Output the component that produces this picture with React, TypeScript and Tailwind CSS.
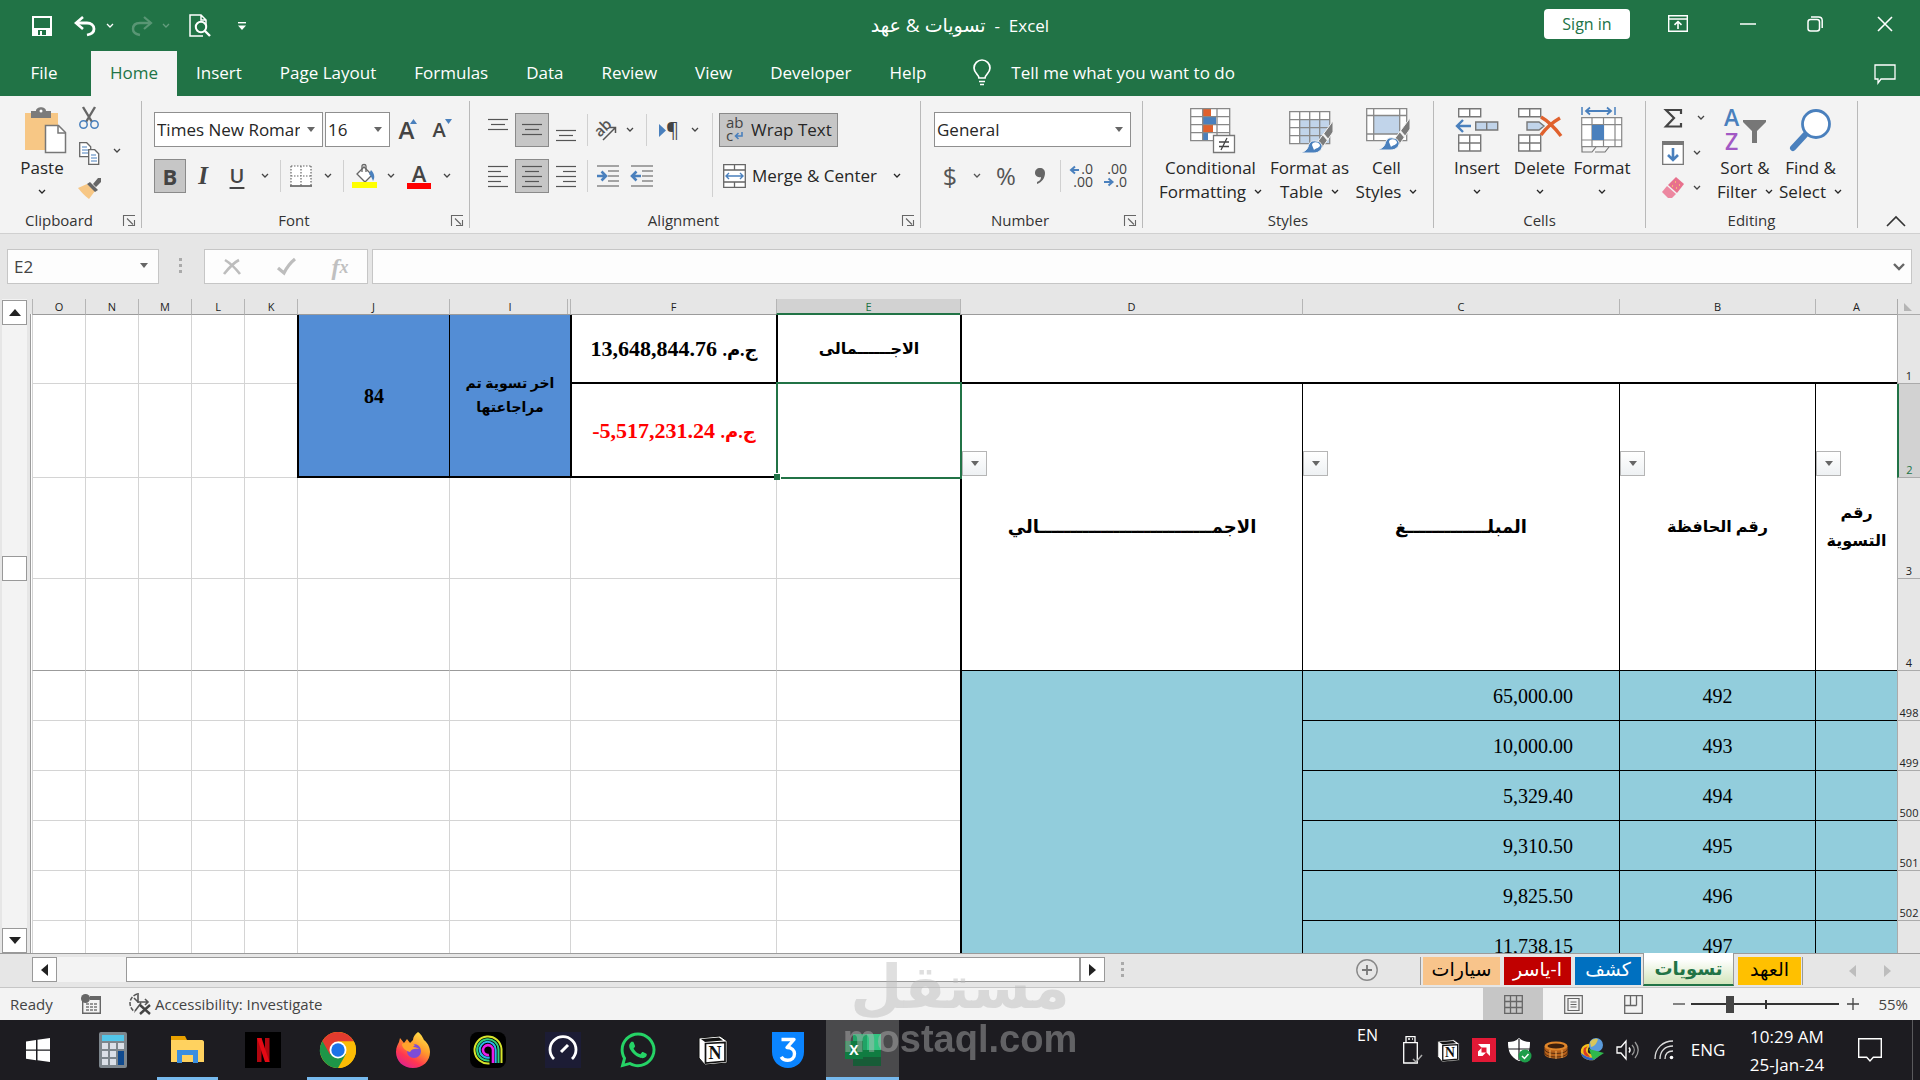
import React from "react";
import { FaWhatsapp } from "react-icons/fa";

const UI = "font-['Open_Sans','Noto_Sans','DejaVu_Sans',sans-serif]";
const SERIF = "font-['Liberation_Serif','DejaVu_Sans',serif]";

type Kids = { children?: React.ReactNode };

function Svg({ w, h, children, className = "" }: Kids & { w: number; h: number; className?: string }) {
  return (
    <svg width={w} height={h} viewBox={`0 0 ${w} ${h}`} fill="none" aria-hidden="true" className={`shrink-0 overflow-visible ${className}`}>
      {children}
    </svg>
  );
}

const Chev = () => (
  <Svg w={8} h={6}>
    <path d="M1 1l3 3 3-3" stroke="currentColor" strokeWidth="1.3" />
  </Svg>
);

const Tri = ({ className = "" }: { className?: string }) => (
  <Svg w={8} h={5} className={className}>
    <path d="M0 0h8L4 5z" fill="#666" />
  </Svg>
);

function Btn({ label, className = "", children }: Kids & { label: string; className?: string }) {
  return (
    <button type="button" aria-label={label} className={`flex shrink-0 items-center justify-center ${className}`}>
      {children}
    </button>
  );
}

const More = ({ label, className = "w-[22px]" }: { label: string; className?: string }) => (
  <Btn label={label} className={`h-[34px] ${className}`}>
    <Chev />
  </Btn>
);

const Sep = ({ className = "h-8" }: { className?: string }) => (
  <div className={`mx-1 w-px shrink-0 bg-[#d0d0d0] ${className}`} />
);

function Picker({ label, value, className }: { label: string; value: string; className: string }) {
  return (
    <div className={`relative h-[35px] shrink-0 ${className}`}>
      <select
        aria-label={label}
        className="h-full w-full appearance-none overflow-hidden rounded-none border border-[#8f8f8f] bg-white pr-[22px] pl-[2px] text-[17px] text-[#262626]"
      >
        <option>{value}</option>
      </select>
      <Tri className="pointer-events-none absolute top-[15px] right-2" />
    </div>
  );
}

/* ---------- title bar ---------- */

function TitleBar() {
  return (
    <header className="flex h-[51px] items-center text-white">
      <div className="flex flex-1 items-center">
        <Btn label="Save" className="ml-6 w-9">
          <Svg w={20} h={20}>
            <path d="M1 1h18v18H1z" stroke="#fff" strokeWidth="2" />
            <path d="M1 12h18v7H1z" fill="#fff" />
            <path d="M6 14h8v5H6z" fill="#217346" />
            <path d="M8 15h2v4H8z" fill="#fff" />
          </Svg>
        </Btn>
        <Btn label="Undo" className="ml-[7px] w-9">
          <Svg w={22} h={20}>
            <path d="M9 1L2 7l7 6" stroke="#fff" strokeWidth="2.6" />
            <path d="M3 7h10c4 0 7 2 7 6 0 3-2 5-7 6" stroke="#fff" strokeWidth="2.8" />
          </Svg>
        </Btn>
        <More label="Undo history" className="ml-px w-3" />
        <Btn label="Redo" className="ml-2 w-9 opacity-25">
          <Svg w={22} h={20}>
            <path d="M13 1l7 6-7 6" stroke="#fff" strokeWidth="2.2" />
            <path d="M19 7H9c-4 0-7 2-7 6 0 3 2 5 7 6" stroke="#fff" strokeWidth="2.4" />
          </Svg>
        </Btn>
        <More label="Redo history" className="w-3 opacity-30" />
        <Btn label="Print Preview" className="ml-[10px] w-9">
          <Svg w={22} h={24}>
            <path d="M14 22H1V1h11l5 5v5M12 1v5h5" stroke="#fff" strokeWidth="1.5" />
            <circle cx="12" cy="13" r="5.2" stroke="#fff" strokeWidth="2" />
            <path d="M16 17l5 5" stroke="#fff" strokeWidth="2.4" />
          </Svg>
        </Btn>
        <Btn label="Customize Quick Access Toolbar" className="ml-[6px] w-9">
          <Svg w={8} h={8}>
            <path d="M0 .7h8" stroke="#fff" strokeWidth="1.4" />
            <path d="M0 3.500h8L4 8z" fill="#fff" />
          </Svg>
        </Btn>
      </div>
      <h1 className="text-[17px] leading-6 whitespace-pre">
        <bdi dir="rtl" className="text-[19px]">تسويات &amp; عهد</bdi>
        {"  -  Excel"}
      </h1>
      <div className="flex flex-1 items-center justify-end">
        <button type="button" className="mr-[22px] mb-1 h-[30px] w-[86px] rounded-sm bg-white text-base text-[#217346]">
          Sign in
        </button>
        <Btn label="Ribbon Display Options" className="h-11 w-[52px] pb-1">
          <Svg w={20} h={17}>
            <path d="M.7.7h18.6v15.6H.7zM1 4h18" stroke="#fff" strokeWidth="1.4" />
            <path d="M10 14V7M6.5 9.800L10 6.500l3.500 3.300" stroke="#fff" strokeWidth="1.600" />
          </Svg>
        </Btn>
        <Btn label="Minimize" className="ml-3 h-11 w-16 pb-1">
          <Svg w={16} h={2}>
            <path d="M0 1h16" stroke="#fff" strokeWidth="1.500" />
          </Svg>
        </Btn>
        <Btn label="Restore" className="h-11 w-[70px] pb-1">
          <Svg w={16} h={16}>
            <rect x="1" y="3.500" width="11.500" height="11.500" rx="2.500" stroke="#fff" strokeWidth="1.500" />
            <path d="M4 1h7.500c2.200 0 3.700 1.500 3.700 3.500V12" stroke="#fff" strokeWidth="1.500" />
          </Svg>
        </Btn>
        <Btn label="Close" className="h-11 w-[70px] pb-1">
          <Svg w={16} h={16}>
            <path d="M1 1l14 14M15 1L1 15" stroke="#fff" strokeWidth="1.600" />
          </Svg>
        </Btn>
      </div>
    </header>
  );
}

const TABS = ["Insert", "Page Layout", "Formulas", "Data", "Review", "View", "Developer", "Help"];

function TabBar() {
  return (
    <nav className="flex h-[45px] text-[17px] text-white">
      <button type="button" className="w-[88px] pb-[2px]">File</button>
      <button type="button" className="ml-[3px] w-[86px] bg-[#f3f3f3] pb-[2px] text-[#217346]">Home</button>
      {TABS.map((t) => (
        <button type="button" key={t} className="px-[19px] pb-[2px] whitespace-nowrap">{t}</button>
      ))}
      <button type="button" className="flex items-center pb-[2px] pl-7 whitespace-nowrap">
        <Svg w={18} h={26}>
          <path d="M6 18c0-3-5-5-5-10a8 8 0 0116 0c0 5-5 7-5 10z" stroke="#fff" strokeWidth="1.700" />
          <path d="M6 21.500h6M7 24.500h4" stroke="#fff" strokeWidth="1.600" />
        </Svg>
        <span className="ml-5">Tell me what you want to do</span>
      </button>
      <Btn label="Comments" className="mr-[13px] ml-auto w-11">
        <Svg w={22} h={20}>
          <path d="M1 1h20v14H7l-3 4v-4H1z" stroke="#fff" strokeWidth="1.300" />
        </Svg>
      </Btn>
    </nav>
  );
}

/* ---------- ribbon ---------- */

function Group({ label, launcher, className, children }: Kids & { label: string; launcher?: boolean; className: string }) {
  return (
    <section aria-label={label} className={`my-[5px] flex shrink-0 flex-col border-r border-[#b9b9b9] ${className}`}>
      <div className="flex-1">{children}</div>
      <div className="flex h-4 items-center text-[15px] leading-4 text-[#333]">
        <span className="flex-1 text-center">{label}</span>
        {launcher && (
          <Btn label={`${label} settings`} className="mr-[5px] ml-1 w-[14px]">
            <Svg w={12} h={11}>
              <path d="M.5 11V.5H12M11.500 5v5.500H5M4 3.500l6 6" stroke="#666" strokeWidth="1.100" />
            </Svg>
          </Btn>
        )}
      </div>
    </section>
  );
}

function Big({ label, lines, icon, className }: { label?: string; lines: string[]; icon: React.ReactNode; className: string }) {
  return (
    <button type="button" aria-label={label} className={`flex shrink-0 flex-col items-center text-[17px] leading-6 whitespace-nowrap text-[#262626] ${className}`}>
      <span className="flex h-[48px] items-center">{icon}</span>
      <span className="mt-[2px]">{lines[0]}</span>
      <span className="flex h-6 items-center gap-2">
        {lines[1]}
        <Chev />
      </span>
    </button>
  );
}

function Lines({ rows, y = 1, gap = 5 }: { rows: [number, number][]; y?: number; gap?: number }) {
  return (
    <Svg w={20} h={22}>
      {rows.map(([a, b], i) => (
        <path key={i} d={`M${a} ${y + i * gap + 0.5}H${b}`} stroke="#555" strokeWidth="1.200" />
      ))}
    </Svg>
  );
}

const L: [number, number][] = [[0, 20], [0, 13], [0, 20], [0, 13], [0, 20]];
const C: [number, number][] = [[0, 20], [3, 17], [0, 20], [3, 17], [0, 20]];
const R: [number, number][] = [[0, 20], [7, 20], [0, 20], [7, 20], [0, 20]];
const V: [number, number][] = [[0, 20], [3, 17], [0, 20]];

const ON = "border border-[#8a8a8a] bg-[#c6c6c6]";

function Indent({ out }: { out?: boolean }) {
  return (
    <Svg w={22} h={22}>
      <path d="M0 1h22M0 21h22M11 6h11M11 11h11M11 16h11" stroke="#555" strokeWidth="1.200" />
      <path
        d={out ? "M1 11h9M5.500 6.500L1 11l4.500 4.500" : "M0 11h9M4.500 6.500L9 11l-4.500 4.500"}
        stroke="#4a80bd"
        strokeWidth="2.600"
      />
    </Svg>
  );
}

function Brush({ x, y }: { x: number; y: number }) {
  return (
    <g transform={`translate(${x} ${y})`}>
      <path d="M33 0v11L22 27l-6-4z" fill="#7b7b7b" stroke="#f3f3f3" strokeWidth="1" />
      <path d="M23 13l5 6" stroke="#f3f3f3" strokeWidth="2" />
      <path d="M16 20c-5-1-7 2-8 6-1 3-4 5-8 6h14c5 0 9-4 8-8-1-2-3-4-6-4z" fill="#4a80bd" stroke="#f3f3f3" />
      <path d="M12 24c0-3 6-4 8 0 0 3-4 3-6 5z" fill="#fff" />
    </g>
  );
}

function Ribbon() {
  return (
    <div className="flex h-[138px] items-stretch border-b border-[#d0d0d0] bg-[#f3f3f3] text-[#444]">
      <Group label="Clipboard" launcher className="w-[142px]">
        <div className="flex pt-[5px] pl-4">
          <Big
            label="Paste"
            lines={["Paste", ""]}
            className="w-[52px]"
            icon={
              <Svg w={44} h={46} className="ml-2">
                <path d="M1 6h33v37H1z" fill="#f7c785" />
                <path d="M7 4h5c0-5 10-5 10 0h5v7H7z" fill="#7b7b7b" />
                <circle cx="17" cy="4" r="1.500" fill="#fff" />
                <path d="M21.500 18.500h13l7 7v20h-20z" fill="#fff" stroke="#777" strokeWidth="1.500" />
                <path d="M34 19v7h7" stroke="#777" strokeWidth="1.500" />
              </Svg>
            }
          />
          <div className="ml-[3px] flex flex-col">
            <Btn label="Cut" className="h-7 w-9 pb-1">
              <Svg w={20} h={22}>
                <path d="M4 0l9 15M16 0L7 15" stroke="#666" strokeWidth="2.400" />
                <circle cx="4.500" cy="17.500" r="3.700" stroke="#4a80bd" strokeWidth="1.500" />
                <circle cx="15.500" cy="17.500" r="3.700" stroke="#4a80bd" strokeWidth="1.500" />
              </Svg>
            </Btn>
            <div className="flex">
              <Btn label="Copy" className="h-[38px] w-9">
                <Svg w={21} h={23}>
                  <path d="M.7.700h7l4 4v10h-11z" fill="#fff" stroke="#666" strokeWidth="1.300" />
                  <path d="M3 5h5M3 8h6M3 11h6" stroke="#4a80bd" strokeWidth="1.200" />
                  <path d="M9.700 7.700h6l4 4v10.600h-10z" fill="#fff" stroke="#666" strokeWidth="1.300" />
                  <path d="M12 13h5M12 16h6M12 19h6" stroke="#4a80bd" strokeWidth="1.200" />
                </Svg>
              </Btn>
              <More label="Copy options" className="w-5" />
            </div>
            <Btn label="Format Painter" className="h-8 w-9">
              <Svg w={23} h={21}>
                <path d="M0 10l9-4 8 7-6 8C6 17 3 14 0 10z" fill="#f7c785" />
                <path d="M9 6l3-2 8 8-3 2zM15 6l5-6h3v4l-5 5z" fill="#666" />
              </Svg>
            </Btn>
          </div>
        </div>
      </Group>

      <Group label="Font" launcher className="w-[328px]">
        <div className="flex flex-col gap-3 pt-[11px] pl-3">
          <div className="flex items-center">
            <Picker label="Font" value="Times New Roman" className="w-[169px]" />
            <Picker label="Font size" value="16" className="ml-[2px] w-[65px]" />
            <Btn label="Increase font size" className="w-9 items-end text-[24px] leading-7 font-semibold">
              <span>A</span>
              <Svg w={7} h={5} className="mb-5 -ml-1">
                <path d="M0 5h7L3.500 0z" fill="#4a80bd" />
              </Svg>
            </Btn>
            <Btn label="Decrease font size" className="w-8 items-end text-[20px] leading-7 font-semibold">
              <span>A</span>
              <Svg w={7} h={5} className="mb-5 -ml-px">
                <path d="M0 0h7L3.500 5z" fill="#4a80bd" />
              </Svg>
            </Btn>
          </div>
          <div className="flex items-center">
            <Btn label="Bold" className={`h-[34px] w-8 text-[22px] font-bold ${ON}`}>B</Btn>
            <Btn label="Italic" className="w-[34px] font-['Liberation_Serif',serif] text-[25px] leading-8 font-bold italic">I</Btn>
            <Btn label="Underline" className="w-[34px] text-[20px] leading-8 font-semibold underline underline-offset-4">U</Btn>
            <More label="Underline options" />
            <Sep />
            <Btn label="Borders" className="w-8">
              <Svg w={22} h={22}>
                <path d="M1 1h20v20H1z" fill="#fff" />
                <path d="M1 1h20M1 11h20M1 1v20M11 1v20M21 1v20" stroke="#666" strokeWidth="1.200" strokeDasharray="1.500 1.500" />
                <path d="M0 21h22" stroke="#555" strokeWidth="1.500" />
              </Svg>
            </Btn>
            <More label="Border options" />
            <Sep />
            <Btn label="Fill color" className="w-8">
              <Svg w={25} h={24}>
                <path d="M5 10l7-7 8 8-7 7z" fill="#fff" stroke="#666" strokeWidth="1.300" />
                <path d="M10 8V2c0-2 4-2 4 0v6" stroke="#666" strokeWidth="1.300" />
                <path d="M19 6c4 4 4 8 2 11-1-3-2-5-4-7z" fill="#4a80bd" />
                <path d="M0 18h25v6H0z" fill="#ff0" />
              </Svg>
            </Btn>
            <More label="Fill color options" />
            <Btn label="Font color" className="w-[34px] flex-col text-[22px] leading-5 font-semibold">
              <span>A</span>
              <span className="h-[6px] w-6 bg-[#f00]" />
            </Btn>
            <More label="Font color options" />
          </div>
        </div>
      </Group>

      <Group label="Alignment" launcher className="w-[451px]">
        <div className="flex items-start pt-3 pl-[11px]">
          <div className="flex flex-col gap-3">
            <div className="flex items-center">
              <Btn label="Top Align" className="h-[34px] w-[34px]"><Lines rows={V} y={0} /></Btn>
              <Btn label="Middle Align" className={`h-[34px] w-[34px] ${ON}`}><Lines rows={V} y={5} /></Btn>
              <Btn label="Bottom Align" className="h-[34px] w-[34px]"><Lines rows={V} y={11} /></Btn>
              <Sep />
              <Btn label="Orientation" className="w-7">
                <Svg w={22} h={22}>
                  <text x="0" y="15" transform="rotate(-45 7 11)" fontSize="15" fontWeight="600" fill="#555">ab</text>
                  <path d="M8 21L20 9M15 8.500h5.500V14" stroke="#555" strokeWidth="1.500" />
                </Svg>
              </Btn>
              <More label="Orientation options" className="w-5" />
              <Sep className="ml-[6px] h-8" />
              <Btn label="Text direction" className="w-9 text-[20px] leading-7">
                <Svg w={7} h={13}>
                  <path d="M0 0l7 6.500L0 13z" fill="#4a80bd" />
                </Svg>
                ¶
              </Btn>
              <More label="Text direction options" className="w-4" />
            </div>
            <div className="flex items-center">
              <Btn label="Align Left" className="h-[34px] w-[34px]"><Lines rows={L} /></Btn>
              <Btn label="Center" className={`h-[34px] w-[34px] ${ON}`}><Lines rows={C} /></Btn>
              <Btn label="Align Right" className="h-[34px] w-[34px]"><Lines rows={R} /></Btn>
              <Sep />
              <Btn label="Decrease Indent" className="h-[34px] w-8"><Indent /></Btn>
              <Btn label="Increase Indent" className="h-[34px] w-9"><Indent out /></Btn>
            </div>
          </div>
          <Sep className="mr-[6px] ml-[9px] h-[84px]" />
          <div className="flex flex-col gap-3 text-[17px] text-[#262626]">
            <button type="button" className={`flex h-[34px] w-[119px] items-center gap-[6px] pl-[6px] whitespace-nowrap ${ON}`}>
              <Svg w={19} h={24}>
                <text x="0" y="10" fontSize="15" fill="#444">ab</text>
                <text x="0" y="23" fontSize="15" fill="#444">c</text>
                <path d="M16 14v4h-6M12.500 15l-3 3 3 3" stroke="#4a80bd" strokeWidth="1.600" />
              </Svg>
              Wrap Text
            </button>
            <div className="flex items-center">
              <button type="button" className="flex h-[34px] items-center gap-[6px] pl-1 whitespace-nowrap">
                <Svg w={23} h={24}>
                  <path d="M.7.700h21.600v22.600H.700zM.7 6h21.600M.7 18h21.600M11.500 1v5M11.500 18v5" fill="#fff" stroke="#666" strokeWidth="1.300" />
                  <path d="M3 12h17M6 9l-3 3 3 3M17 9l3 3-3 3" stroke="#4a80bd" strokeWidth="1.400" />
                </Svg>
                Merge &amp; Center
              </button>
              <More label="Merge options" className="ml-2 w-6" />
            </div>
          </div>
        </div>
      </Group>

      <Group label="Number" launcher className="w-[222px]">
        <div className="flex flex-col gap-3 pt-[11px] pl-[13px]">
          <Picker label="Number format" value="General" className="w-[197px]" />
          <div className="flex items-center text-[25px] leading-8 text-[#555]">
            <Btn label="Accounting format" className="w-8">$</Btn>
            <More label="Accounting options" />
            <Btn label="Percent style" className="w-9 text-[24px]">%</Btn>
            <Btn label="Comma style" className="w-8">
              <Svg w={10} h={16}>
                <path d="M5 0c3 0 5 2 5 5 0 5-3 9-8 11v-2c3-1 4-3 4-5C2 10 0 7 0 5c0-3 2-5 5-5z" fill="#666" />
              </Svg>
            </Btn>
            <Sep />
            <Btn label="Increase Decimal" className="w-8">
              <Svg w={23} h={26}>
                <text x="23" y="11" textAnchor="end" fontSize="14" fill="#444">.0</text>
                <text x="23" y="24" textAnchor="end" fontSize="14" fill="#444">.00</text>
                <path d="M1 7h8M5 3.500L1 7l4 3.500" stroke="#4a80bd" strokeWidth="2" />
              </Svg>
            </Btn>
            <Btn label="Decrease Decimal" className="w-9">
              <Svg w={23} h={26}>
                <text x="23" y="11" textAnchor="end" fontSize="14" fill="#444">.00</text>
                <text x="23" y="24" textAnchor="end" fontSize="14" fill="#444">.0</text>
                <path d="M0 19h8M4.500 15.500l4 3.500-4 3.500" stroke="#4a80bd" strokeWidth="2" />
              </Svg>
            </Btn>
          </div>
        </div>
      </Group>

      <Group label="Styles" className="w-[291px]">
        <div className="flex pt-[5px] pl-3">
          <Big
            lines={["Conditional", "Formatting"]}
            className="w-[111px]"
            icon={
              <Svg w={45} h={45} className="ml-1">
                <path d="M.7.700h39v32h-39z" fill="#fff" />
                <path d="M13 1h8v8h-8zM13 17h10v8H13z" fill="#e0612d" />
                <path d="M13 9h13v8H13zM13 25h5v8h-5z" fill="#4a80bd" />
                <path d="M.7.700h39v32h-39zM.7 8.700h39M.7 16.700h39M.7 24.700h39M12.700 1v32M27 1v32" stroke="#888" strokeWidth="1.300" />
                <path d="M23.500 27.500h21v17h-21z" fill="#fff" stroke="#777" strokeWidth="1.300" />
                <path d="M29 34h10M29 38.500h10M37 30l-6 12" stroke="#444" strokeWidth="1.300" />
              </Svg>
            }
          />
          <Big
            lines={["Format as", "Table"]}
            className="w-[87px]"
            icon={
              <Svg w={46} h={44} className="mt-[6px] ml-1">
                <path d="M.7.700h40v32h-40z" fill="#fff" />
                <path d="M10.700 8.700h30v24h-30z" fill="#c1d4ea" />
                <path d="M.7.700h40v32h-40zM.7 8.700h40M.7 16.700h40M.7 24.700h40M10.700 1v32M20.700 1v32M30.700 1v32" stroke="#888" strokeWidth="1.300" />
                <Brush x={11} y={10} />
              </Svg>
            }
          />
          <Big
            lines={["Cell", "Styles"]}
            className="w-[67px]"
            icon={
              <Svg w={46} h={44} className="ml-1">
                <path d="M.7.700h40v32h-40z" fill="#fff" />
                <path d="M7.700 8h26v18h-26z" fill="#c1d4ea" />
                <path d="M.7.700h40v32h-40zM.7 7.500h40M.7 26h40M7.700 1v32M33.700 1v32" stroke="#888" strokeWidth="1.300" />
                <Brush x={11} y={10} />
              </Svg>
            }
          />
        </div>
      </Group>

      <Group label="Cells" className="w-[212px]">
        <div className="flex pt-[5px] pl-3">
          <Big
            label="Insert"
            lines={["Insert", ""]}
            className="w-[62px]"
            icon={
              <Svg w={44} h={44}>
                <path d="M3.700.700h22v8h-22zM14.700.700v8M3.700 27h22v16h-22zM3.700 35h22M14.700 27v16" fill="#fff" stroke="#777" strokeWidth="1.400" />
                <path d="M20.700 14h22v8h-22zM31.700 14v8" fill="#c1d4ea" stroke="#777" strokeWidth="1.400" />
                <path d="M2 18h14M8 12l-6 6 6 6" stroke="#4a80bd" strokeWidth="2.400" />
              </Svg>
            }
          />
          <Big
            label="Delete"
            lines={["Delete", ""]}
            className="w-[63px]"
            icon={
              <Svg w={44} h={44}>
                <path d="M.7.700h22v8h-22zM11.700.700v8M.7 27h22v16h-22zM.7 35h22M11.700 27v16" fill="#fff" stroke="#777" strokeWidth="1.400" />
                <path d="M9 14h12l5 4-5 4H9z" fill="#c1d4ea" stroke="#777" strokeWidth="1.400" />
                <path d="M23 9c7 4 14 11 20 19M42 10c-7 4-14 10-19 17" stroke="#e0612d" strokeWidth="3.400" />
              </Svg>
            }
          />
          <Big
            label="Format"
            lines={["Format", ""]}
            className="w-[62px]"
            icon={
              <Svg w={42} h={46}>
                <path d="M1 0v8M34 0v8" stroke="#4a80bd" strokeWidth="1.500" />
                <path d="M5 4h25M9 .500L5 4l4 3.500M26 .500L30 4l-4 3.500" stroke="#4a80bd" strokeWidth="1.800" />
                <path d="M.7 10.700h40v29h-40zM.7 17.700h40M.7 33h40M11 11v29M22.500 11v29M34 11v29" fill="#fff" stroke="#888" strokeWidth="1.200" />
                <path d="M11 18h12v15H11z" fill="#4a80bd" />
                <path d="M1 40v5h10l4-5M14 45h10l4-5" stroke="#777" strokeWidth="1.200" />
              </Svg>
            }
          />
        </div>
      </Group>

      <Group label="Editing" className="w-[212px]">
        <div className="flex pt-[5px] pl-[11px]">
          <div className="flex w-14 flex-col text-[#444]">
            <div className="flex h-7 items-center pb-1">
              <Btn label="AutoSum" className="w-8">
                <Svg w={18} h={19}>
                  <path d="M17 5V1H2l8 8-8 8.500h15V14" stroke="#444" strokeWidth="2.200" />
                </Svg>
              </Btn>
              <More label="AutoSum options" className="w-6" />
            </div>
            <div className="flex h-[38px] items-center">
              <Btn label="Fill" className="w-8">
                <Svg w={22} h={24}>
                  <path d="M.7.700h20.600v22.600H.700z" fill="#fff" stroke="#777" strokeWidth="1.300" />
                  <path d="M0 0h22v4H0z" fill="#777" />
                  <path d="M11 7v12M6 14l5 5 5-5" stroke="#4a80bd" strokeWidth="2.600" />
                </Svg>
              </Btn>
              <More label="Fill options" className="w-4" />
            </div>
            <div className="flex h-8 items-center">
              <Btn label="Clear" className="w-8">
                <Svg w={22} h={22}>
                  <path d="M14 0l8 7-7 9-9-8z" fill="#e8718d" />
                  <path d="M5 9l9 8-4 4H6l-6-6z" fill="#ec87a0" />
                  <path d="M13 5h1M17 8h1M10 9h1M14 11h1" stroke="#f8d06b" strokeWidth="1.400" />
                </Svg>
              </Btn>
              <More label="Clear options" className="w-4" />
            </div>
          </div>
          <Big
            lines={["Sort &", "Filter"]}
            className="w-16"
            icon={
              <Svg w={42} h={44}>
                <text x="0" y="18" fontSize="23" fill="#4a80bd" fontWeight="600">A</text>
                <text x="1" y="42" fontSize="23" fill="#a259c4" fontWeight="600">Z</text>
                <path d="M19 12h23v2l-9 9v12h-5V23l-9-9z" fill="#777" />
              </Svg>
            }
          />
          <Big
            lines={["Find &", "Select"]}
            className="w-[67px]"
            icon={
              <Svg w={42} h={44}>
                <circle cx="26" cy="16" r="13.500" fill="#fff" stroke="#4a80bd" strokeWidth="2.800" />
                <path d="M15 27L3 40" stroke="#4a80bd" strokeWidth="6" strokeLinecap="round" />
              </Svg>
            }
          />
        </div>
      </Group>
      <Btn label="Collapse the Ribbon" className="mr-3 ml-auto h-6 w-6 self-end">
        <Svg w={20} h={12}>
          <path d="M1 11l9-9 9 9" stroke="#333" strokeWidth="1.600" />
        </Svg>
      </Btn>
    </div>
  );
}

/* ---------- formula bar ---------- */

const Dots = ({ className = "" }: { className?: string }) => (
  <Svg w={3} h={16} className={className}>
    <path d="M0 0h3v3H0zM0 6h3v3H0zM0 12h3v3H0z" fill="#aaa" />
  </Svg>
);

function FormulaBar() {
  return (
    <div className="flex h-[65px] items-start bg-[#e6e6e6] pt-[15px] pr-2 pl-[7px]">
      <div className="relative h-[35px] w-[152px]">
        <input aria-label="Name Box" defaultValue="E2" className="h-full w-full border border-[#c6c6c6] bg-[#fdfdfd] px-[6px] text-[17px] text-[#444]" />
        <Tri className="absolute top-[14px] right-[11px]" />
      </div>
      <Dots className="mt-[9px] ml-5" />
      <div className="ml-[22px] flex h-[35px] w-[164px] items-center border border-[#c6c6c6] bg-[#fdfdfd] text-[#c0c0c0]">
        <Btn label="Cancel" className="flex-1">
          <Svg w={18} h={16}>
            <path d="M2 1c5 3 11 9 15 14M16 1C10 4 5 10 1 15" stroke="#bdbdbd" strokeWidth="2.600" />
          </Svg>
        </Btn>
        <Btn label="Enter" className="flex-1">
          <Svg w={19} h={17}>
            <path d="M1 10l6 5C10 9 13 5 18 1" stroke="#bdbdbd" strokeWidth="3.200" />
          </Svg>
        </Btn>
        <Btn label="Insert Function" className="flex-1 font-['Liberation_Serif',serif] text-[24px] leading-7 font-bold italic">
          <span>f</span>
          <span className="text-[18px]">x</span>
        </Btn>
      </div>
      <div className="relative ml-1 h-[35px] flex-1">
        <input aria-label="Formula Bar" className="h-full w-full border border-[#c6c6c6] bg-[#fdfdfd] px-2 text-[17px]" />
        <Svg w={12} h={8} className="absolute top-[14px] right-[7px]">
          <path d="M1 1l5 5 5-5" stroke="#666" strokeWidth="2.400" />
        </Svg>
      </div>
    </div>
  );
}

/* ---------- worksheet ---------- */

const EMPTY = ["K", "L", "M", "N", "O"];
const DATA = [
  { row: 498, id: "492", amount: "65,000.00" },
  { row: 499, id: "493", amount: "10,000.00" },
  { row: 500, id: "494", amount: "5,329.40" },
  { row: 501, id: "495", amount: "9,310.50" },
  { row: 502, id: "496", amount: "9,825.50" },
  { row: 503, id: "497", amount: "11,738.15" },
];

/* Arabic elongation (tatweel) of a given length. */
const stretch = (n: number) => "\u0640".repeat(n);

const G = "border-b border-l border-[#d4d4d4] p-0";

function RowHead({ n, active }: { n: number; active?: boolean }) {
  return (
    <th
      scope="row"
      className={`border-b border-b-[#ababab] p-0 text-center align-bottom text-[11px] leading-[14px] font-normal ${
        active ? "border-l-2 border-l-[#217346] bg-[#d2d2d2] text-[#217346]" : "border-l border-l-[#ababab] bg-[#e6e6e6] text-[#222]"
      }`}
    >
      {n}
    </th>
  );
}

function FilterButton({ label }: { label: string }) {
  return (
    <Btn label={label} className="absolute top-[67px] left-0 h-[25px] w-[25px] border border-[#b5b5b5] bg-linear-to-b from-white to-[#eef1f3]">
      <Tri />
    </Btn>
  );
}

const Blank = ({ cols, className = "" }: { cols: string[]; className?: string }) => (
  <>
    {cols.map((c) => (
      <td key={c} className={`${G} ${className}`} />
    ))}
  </>
);

function Sheet() {
  const head = "relative border-l border-b border-l-[#b5b5b5] border-b-[#9b9b9b] p-0 text-[11px] leading-[14px] font-normal text-[#222]";
  const title = `relative border-b border-black p-0 text-center font-bold ${SERIF}`;
  return (
    <table dir="rtl" className="w-full table-fixed border-separate border-spacing-0 bg-white text-black">
      <colgroup>
        <col className="w-[23px]" />
        <col className="w-[82px]" />
        <col className="w-[196px]" />
        <col className="w-[317px]" />
        <col />
        <col className="w-[184px]" />
        <col className="w-[206px]" />
        <col className="w-[121px]" />
        <col className="w-[152px]" />
        {EMPTY.map((c) => (
          <col key={c} className="w-[53px]" />
        ))}
      </colgroup>
      <thead>
        <tr className="h-4 bg-[#e6e6e6]">
          <th className="border-b border-l border-[#ababab] p-0 pr-2" aria-label="Select all">
            <Svg w={8} h={8}>
              <path d="M0 0v8h8z" fill="#b5b5b5" />
            </Svg>
          </th>
          {["A", "B", "C", "D", "E", "F", "I", "J", ...EMPTY].map((c) =>
            c === "E" ? (
              <th key={c} scope="col" className="border-b-2 border-l border-b-[#217346] border-l-[#b5b5b5] bg-[#d2d2d2] p-0 text-[11px] leading-[13px] font-normal text-[#217346]">
                {c}
              </th>
            ) : (
              <th key={c} scope="col" className={head}>
                {c}
                {c === "I" && <span className="absolute inset-y-0 right-[2px] w-px bg-[#b5b5b5]" />}
              </th>
            ),
          )}
        </tr>
      </thead>
      <tbody>
        <tr className="h-[69px]">
          <RowHead n={1} />
          <td colSpan={4} className="border-b-2 border-l-2 border-black p-0" />
          <td className={`border-b-2 border-l-2 border-black p-0 text-center text-[16px] font-bold ${SERIF}`}>{`الاجـ${stretch(4)}ـمالى`}</td>
          <td className={`border-b-2 border-l-2 border-black p-0 text-center text-[22px] font-bold whitespace-nowrap ${SERIF}`}>
            <span className="text-[18px]">ج.م.</span> <bdi dir="ltr">13,648,844.76</bdi>
          </td>
          <td rowSpan={2} className={`border-b-2 border-l border-black bg-[#538dd5] px-1 text-center text-[14px] leading-6 font-bold ${SERIF}`}>
            اخر تسوية تم
            <br />
            مراجاعتها
          </td>
          <td rowSpan={2} className={`border-b-2 border-l-2 border-black bg-[#538dd5] p-0 text-center text-[20px] font-bold ${SERIF}`}>84</td>
          <Blank cols={EMPTY} />
        </tr>
        <tr className="h-[94px]">
          <RowHead n={2} active />
          <td rowSpan={3} className={`${title} border-l text-[16px] leading-7`}>
            <FilterButton label="Filter column A" />
            رقم
            <br />
            التسوية
          </td>
          <td rowSpan={3} className={`${title} border-l text-[16px]`}>
            <FilterButton label="Filter column B" />
            رقم الحافظة
          </td>
          <td rowSpan={3} className={`${title} border-l text-[18px]`}>
            <FilterButton label="Filter column C" />
            {`المبلـ${stretch(11)}ـغ`}
          </td>
          <td rowSpan={3} className={`${title} border-l-2 text-[18px]`}>
            <FilterButton label="Filter column D" />
            {`الاجمـ${stretch(26)}ـالي`}
          </td>
          <td className={`relative ${G}`}>
            <div className="absolute -top-[2px] -right-[2px] -bottom-[2px] -left-px border-2 border-[#217346]" />
            <div className="absolute -bottom-[3px] -left-[3px] size-[7px] border-t border-r border-white bg-[#217346]" />
          </td>
          <td className={`border-b-2 border-l-2 border-black p-0 text-center text-[22px] font-bold whitespace-nowrap text-[#f00] ${SERIF}`}>
            <span className="text-[18px]">ج.م.</span> <bdi dir="ltr">-5,517,231.24</bdi>
          </td>
          <Blank cols={EMPTY} />
        </tr>
        <tr className="h-[101px]">
          <RowHead n={3} />
          <Blank cols={["E", "F", "I", "J", ...EMPTY]} />
        </tr>
        <tr className="h-[92px]">
          <RowHead n={4} />
          <Blank cols={["E", "F", "I", "J", ...EMPTY]} className="border-b-[#9b9b9b]" />
        </tr>
        {DATA.map((d, i) => (
          <tr key={d.row} className="h-[50px]">
            <RowHead n={d.row} />
            <td className="border-b border-l border-black bg-[#92cddc] p-0" />
            <td className={`border-b border-l border-black bg-[#92cddc] p-0 text-center text-[20px] ${SERIF}`}>{d.id}</td>
            <td dir="ltr" className={`border-b border-l border-black bg-[#92cddc] p-0 pr-[45px] text-right text-[20px] ${SERIF}`}>{d.amount}</td>
            {i === 0 && <td rowSpan={DATA.length} className="border-b border-l-2 border-black bg-[#92cddc] p-0" />}
            <Blank cols={["E", "F", "I", "J", ...EMPTY]} />
          </tr>
        ))}
      </tbody>
    </table>
  );
}

const ARROWS = {
  up: "M0 7h12L6 0z",
  down: "M0 0h12L6 7z",
  left: "M7 0v12L0 6z",
  right: "M0 0v12l7-6z",
};

function Arrow({ to, fill = "#222" }: { to: keyof typeof ARROWS; fill?: string }) {
  const tall = to === "left" || to === "right";
  return (
    <Svg w={tall ? 7 : 12} h={tall ? 12 : 7}>
      <path d={ARROWS[to]} fill={fill} />
    </Svg>
  );
}

const BOX = "border border-[#999] bg-white";

function SheetArea() {
  return (
    <div className="flex min-h-0 flex-1 border-b border-[#9b9b9b] bg-[#e6e6e6]">
      <div className="flex w-8 shrink-0 pl-[2px]">
        <div className="flex w-[25px] flex-col bg-[#f3f3f3] pt-px">
          <Btn label="Scroll up" className={`h-[25px] ${BOX}`}><Arrow to="up" /></Btn>
          <div className="grow-[2]" />
          <div className={`h-[25px] ${BOX}`} />
          <div className="grow-[3]" />
          <Btn label="Scroll down" className={`h-[25px] ${BOX}`}><Arrow to="down" /></Btn>
        </div>
        <div className="mt-[15px] ml-[3px] w-[2px] border-l border-[#9b9b9b] bg-white" />
      </div>
      <div className="min-w-0 flex-1 overflow-hidden">
        <Sheet />
      </div>
    </div>
  );
}

const sheetTab = "mb-1 flex h-[28px] items-center justify-center pb-1 text-[19px] leading-6";

function SheetTabs() {
  return (
    <div className="flex h-[34px] shrink-0 items-start border-b border-[#c6c6c6] bg-[#e6e6e6] pl-8">
      <div className="mt-[3px] flex h-[25px] flex-1 bg-[#f3f3f3]">
        <Btn label="Scroll left" className={`w-[25px] ${BOX}`}><Arrow to="left" /></Btn>
        <div className={`ml-[69px] flex-1 ${BOX}`} />
        <Btn label="Scroll right" className={`w-[25px] ${BOX}`}><Arrow to="right" /></Btn>
      </div>
      <div className="flex w-[815px] items-start">
        <Dots className="mt-2 ml-4" />
        <Btn label="New sheet" className="mt-[5px] ml-[232px]">
          <Svg w={22} h={22}>
            <circle cx="11" cy="11" r="10.200" stroke="#888" strokeWidth="1.400" />
            <path d="M11 6v10M6 11h10" stroke="#777" strokeWidth="1.800" />
          </Svg>
        </Btn>
        <div className="ml-[42px] flex gap-1 pt-[3px]">
          <div className="-mr-[2px] h-7 w-px bg-[#999]" />
          <button type="button" className={`${sheetTab} w-[77px] bg-[#f8c48b] text-black`}>سيارات</button>
          <button type="button" className={`${sheetTab} w-[67px] bg-[#c00000] text-white`}>ا-ياسر</button>
          <button type="button" className={`${sheetTab} w-[66px] bg-[#0070c0] text-white`}>كشف</button>
          <button type="button" aria-current="page" className="-mt-[4px] -ml-[2px] flex h-[33px] w-[91px] items-center justify-center border-x border-b-2 border-x-[#999] border-b-[#217346] bg-linear-to-b from-white from-20% to-[#d3e5bb] text-[18px] font-bold text-[#217346]">
            تسويات
          </button>
          <button type="button" className={`${sheetTab} w-[63px] bg-[#ffc000] text-black`}>العهد</button>
          <div className="-ml-[3px] h-7 w-px bg-[#999]" />
        </div>
        <div className="mt-[11px] mr-[29px] ml-auto flex gap-7">
          <Btn label="Previous sheets"><Arrow to="left" fill="#bdbdbd" /></Btn>
          <Btn label="Next sheets"><Arrow to="right" fill="#bdbdbd" /></Btn>
        </div>
      </div>
    </div>
  );
}

/* ---------- status bar ---------- */

function StatusBar() {
  return (
    <footer className="flex h-8 shrink-0 items-center bg-[#f3f3f3] pl-[10px] text-[15px] text-[#444]">
      <span className="w-[71px]">Ready</span>
      <Svg w={20} h={20}>
        <path d="M1.700 6v13.300h17.600V4H8" stroke="#666" strokeWidth="1.400" />
        <path d="M9 2h11v4H9z" fill="#666" />
        <circle cx="4.500" cy="4.500" r="4.500" fill="#666" />
        <path d="M5 10h3M9 10h3M13 10h3M5 13h3M9 13h3M13 13h3M5 16h3M9 16h3M13 16h3" stroke="#777" strokeWidth="1.300" />
      </Svg>
      <button type="button" className="ml-7 flex items-center gap-1 whitespace-nowrap">
        <Svg w={22} h={22}>
          <path d="M8 1C3 3 1 7 1 10c0 4 2 7 5 9" stroke="#555" strokeWidth="1.500" strokeDasharray="4 1.500" />
          <path d="M9 0v10M5 5l4 4h10M16 6l3 3-3 3M6 18l6-8" stroke="#555" strokeWidth="1.600" />
          <path d="M11 12l10 9M21 12l-10 9" stroke="#444" strokeWidth="2.400" />
        </Svg>
        Accessibility: Investigate
      </button>
      <div className="ml-auto flex h-full items-center">
        <Btn label="Normal view" className="h-full w-[60px] bg-[#c6c6c6]">
          <Svg w={19} h={19}>
            <path d="M.7.700h17.600v17.600H.7zM.7 6.500h17.600M.7 12.500h17.600M6.500 1v17M12.500 1v17" stroke="#666" strokeWidth="1.300" />
          </Svg>
        </Btn>
        <Btn label="Page Layout view" className="w-[60px]">
          <Svg w={19} h={19}>
            <path d="M.7.700h17.600v17.600H.7zM4 3.500h11v12H4zM6.500 7h6M6.500 9.500h6M6.500 12h6" stroke="#666" strokeWidth="1.200" />
          </Svg>
        </Btn>
        <Btn label="Page Break view" className="w-[60px]">
          <Svg w={19} h={19}>
            <path d="M.7.700h17.600v17.600H.7zM6.500 1v9.500M12.500 1v9.500M1 10.500h11.500" stroke="#666" strokeWidth="1.300" />
          </Svg>
        </Btn>
        <Btn label="Zoom out" className="ml-1 w-6">
          <Svg w={12} h={12}><path d="M0 6h12" stroke="#444" strokeWidth="1.300" /></Svg>
        </Btn>
        <div className="relative flex h-5 w-[148px] items-center">
          <div className="absolute top-[9px] h-[2px] w-full bg-[#333]" />
          <div className="absolute left-1/2 h-[9px] w-[2px] bg-[#333]" />
          <input
            type="range"
            aria-label="Zoom"
            defaultValue={25}
            className="relative w-full appearance-none bg-transparent [&::-webkit-slider-thumb]:h-[17px] [&::-webkit-slider-thumb]:w-[8px] [&::-webkit-slider-thumb]:appearance-none [&::-webkit-slider-thumb]:bg-[#444]"
          />
        </div>
        <Btn label="Zoom in" className="ml-[2px] w-6">
          <Svg w={12} h={12}><path d="M0 6h12M6 0v12" stroke="#444" strokeWidth="1.300" /></Svg>
        </Btn>
        <span className="w-[55px] pr-3 text-right">55%</span>
      </div>
    </footer>
  );
}

/* ---------- taskbar ---------- */

function Task({ label, open, active, children }: Kids & { label: string; open?: boolean; active?: boolean }) {
  return (
    <button type="button" aria-label={label} className="flex h-[60px] w-[75px] shrink-0 justify-center">
      <span
        className={`flex h-full items-center justify-center ${
          active ? "w-[73px] border-b-[3px] border-[#76b9ed] bg-[#4a4a4c] pt-[3px]" : open ? "w-[61px] border-b-[3px] border-[#76b9ed] pt-[3px]" : "w-[61px]"
        }`}
      >
        {children}
      </span>
    </button>
  );
}

function NotionMark({ w }: { w: number }) {
  return (
    <svg width={w} height={w} viewBox="0 0 30 30" aria-hidden="true">
      <path d="M1 3l21-2 7 5v22l-22 2-6-7z" fill="#fff" stroke="#111" strokeWidth="1" />
      <path d="M3 4l18-1.500 4 3L7 7z" fill="#111" />
      <path d="M7.500 8.500L27 7.300v19L7.500 28z" fill="#fff" stroke="#111" strokeWidth="1.700" />
      <text x="17" y="24" textAnchor="middle" fontSize="18" fontWeight="700" fontFamily="Liberation Serif" fill="#111">N</text>
    </svg>
  );
}

function Taskbar() {
  return (
    <div className="flex h-[60px] shrink-0 bg-[#1d1c21] text-white">
      <Task label="Start">
        <Svg w={24} h={24}>
          <path d="M0 3.500L10 2v9.500H0zM11.500 1.800L24 0v11.500H11.500zM0 12.800h10v9.400L0 20.800zM11.500 12.800H24V24l-12.500-1.700z" fill="#fff" />
        </Svg>
      </Task>
      <Task label="Calculator">
        <Svg w={28} h={36}>
          <rect width="28" height="36" rx="2" fill="#7d868d" />
          <path d="M3 3h22v6H3z" fill="#52c6ea" />
          <path d="M3 11h6v6H3zM11 11h6v6h-6zM19 11h6v6h-6zM3 19h6v6H3zM11 19h6v6h-6zM3 27h6v6H3zM11 27h6v6h-6z" fill="#dbe0e8" />
          <path d="M19 19h6v14h-6z" fill="#104a8e" />
        </Svg>
      </Task>
      <Task label="File Explorer" open>
        <Svg w={33} h={28}>
          <path d="M0 0h14l2 4H0z" fill="#e9a100" />
          <path d="M0 4h31c1 0 2 1 2 2v20H0z" fill="#ffd25f" />
          <path d="M6 14h21v13h-5v-8H11v8H6z" fill="#3a8ee0" />
        </Svg>
      </Task>
      <Task label="Netflix">
        <Svg w={36} h={36}>
          <path d="M0 0h36v36H0z" fill="#000" />
          <path d="M12 6h4.500v24H12zM20 6h4.500v24H20z" fill="#b1060f" />
          <path d="M12 6h4.500l8 24H20z" fill="#e50914" />
        </Svg>
      </Task>
      <Task label="Google Chrome" open>
        <Svg w={36} h={36}>
          <circle cx="18" cy="18" r="18" fill="#fbbc05" />
          <path d="M18 18L2.400 9A18 18 0 0020 35.900L26 22z" fill="#1e9648" />
          <path d="M18 9.500h15.900A18 18 0 002.400 9l7.500 13.500z" fill="#e33b2e" />
          <path d="M18 36a18 18 0 0015.900-26.500H18L26 22z" fill="#fbbc05" />
          <circle cx="18" cy="18" r="8.500" fill="#fff" />
          <circle cx="18" cy="18" r="6.700" fill="#1a73e8" />
        </Svg>
      </Task>
      <Task label="Firefox">
        <Svg w={34} h={36}>
          <defs>
            <linearGradient id="fox" x1="28" y1="2" x2="8" y2="34" gradientUnits="userSpaceOnUse">
              <stop offset="0" stopColor="#ffe14a" />
              <stop offset=".4" stopColor="#ff9a2b" />
              <stop offset=".75" stopColor="#ff3750" />
              <stop offset="1" stopColor="#e0248a" />
            </linearGradient>
          </defs>
          <path d="M22 0c4 3 5 6 6 8 5 4 6 9 6 12 0 9-7 16-17 16S0 29 0 20c0-5 2-8 3-10l1-4 4 5 3-4 3 4 3-3c0-3 2-6 5-8z" fill="url(#fox)" />
          <circle cx="18" cy="19" r="7" fill="#7d4cd8" />
          <path d="M6 12c4-2 8-2 13 1l-2 2c3 0 5 1 6 2-4-1-8 0-9 3-4-1-8-4-8-8z" fill="#ffa42c" />
        </Svg>
      </Task>
      <Task label="Audio">
        <Svg w={36} h={36}>
          <rect width="36" height="36" rx="8" fill="#000" />
          <path d="M31.500 31V17a13.500 13.500 0 10-12 14.400" stroke="#d6e52c" strokeWidth="2" />
          <path d="M28.500 31V17.500a10.700 10.700 0 10-9 10.900" stroke="#2fd07a" strokeWidth="2" />
          <path d="M25.700 31V18a8 8 0 10-6 7.500" stroke="#29b6e8" strokeWidth="2" />
          <path d="M23 31V18a5 5 0 10-4 5" stroke="#e91ee6" strokeWidth="2.600" />
        </Svg>
      </Task>
      <Task label="Speedtest">
        <Svg w={36} h={36}>
          <path d="M0 0h36v36H0z" fill="#1c1c35" />
          <path d="M9 27a13 13 0 1118 0" stroke="#fff" strokeWidth="2.800" />
          <path d="M16 20l7-7" stroke="#fff" strokeWidth="3" />
        </Svg>
      </Task>
      <Task label="WhatsApp">
        <FaWhatsapp size={40} color="#25d366" />
      </Task>
      <Task label="Notion">
        <NotionMark w={30} />
      </Task>
      <Task label="App 3">
        <Svg w={32} h={36}>
          <path d="M0 0h32v20c0 9-7 16-16 16S0 29 0 20z" fill="#0a84ff" />
          <path d="M9.500 7.500h12.500l-7 8c5 0 7.500 3 7.500 6.300 0 4-3 6.500-6.800 6.500-3 0-5.200-1.300-6.500-3.500" stroke="#fff" strokeWidth="3.400" strokeLinejoin="round" />
        </Svg>
      </Task>
      <Task label="Excel" active>
        <Svg w={36} h={32}>
          <path d="M8 0h28v32H8z" fill="#185c37" />
          <path d="M8 0h14v16H8z" fill="#21a366" />
          <path d="M22 0h14v16H22z" fill="#33c481" />
          <path d="M8 16h28v7H8z" fill="#107c41" />
          <path d="M0 7h18v18H0z" fill="#107c41" />
          <text x="9" y="21" textAnchor="middle" fontSize="14" fontWeight="700" fill="#fff">X</text>
        </Svg>
      </Task>

      <div className="ml-auto flex items-center">
        <span className="mr-4 self-start pt-[3px] text-base leading-6">EN</span>
        <Btn label="Safely remove hardware" className="w-9">
          <Svg w={20} h={28}>
            <path d="M4 6V.7h9V6M1.700 6.700h13.600V27H1.700zM6 3h2M10 3h1" stroke="#fff" strokeWidth="1.300" />
            <path d="M11 23l3 3 6-7" stroke="#aaa" strokeWidth="1.500" />
          </Svg>
        </Btn>
        <Btn label="Notion tray" className="w-9"><NotionMark w={23} /></Btn>
        <Btn label="AMD Software" className="w-9">
          <Svg w={24} h={24}>
            <path d="M0 0h24v24H0z" fill="#e21936" />
            <path d="M6 6h12v12l-3.500-3.500v-5h-5zM9.500 10v4.500H14L10.500 18H6v-4.500z" fill="#fff" />
          </Svg>
        </Btn>
        <Btn label="Windows Security" className="w-9">
          <Svg w={24} h={25}>
            <path d="M11 0c3 3 7 4 11 4 0 9-2 15-11 19C2 19 0 13 0 4c4 0 8-1 11-4z" fill="#fff" />
            <path d="M11 1v21M0 11h22" stroke="#1d1c21" strokeWidth="1.200" />
            <circle cx="17" cy="18" r="6.500" fill="#1e9e4a" />
            <path d="M14 18l2.500 2.500L20.500 16" stroke="#fff" strokeWidth="1.500" />
          </Svg>
        </Btn>
        <Btn label="Tray tool" className="w-9">
          <Svg w={24} h={18}>
            <path d="M.5 5v8c0 6 23 6 23 0V5z" fill="#b5601b" />
            <ellipse cx="12" cy="5" rx="11.500" ry="4.500" fill="#e0862a" />
            <ellipse cx="12" cy="5" rx="8.500" ry="2.600" fill="#3c1f0c" />
            <path d="M.5 8c0 6 23 6 23 0M.5 11.500c0 6 23 6 23 0" stroke="#5a2d0c" strokeWidth="1" />
            <path d="M6 9v8M12 10v8M18 9v8" stroke="#f0b060" strokeWidth="1" />
          </Svg>
        </Btn>
        <Btn label="Download Manager" className="w-9">
          <Svg w={24} h={24}>
            <path d="M12 6C4 5 0 10 1 15c1 6 8 8 13 7l6-5-7-2c-3 2-6 0-5-3 0-3 2-4 4-6z" fill="#f2c01d" />
            <path d="M1 15c1 6 8 8 13 7l4-3c-7 2-12 0-17-4z" fill="#2f62c9" />
            <path d="M4 10c-2 5 1 9 6 9l-3-4c-2-2-1-5 1-7z" fill="#d93a26" />
            <circle cx="16" cy="7" r="7" fill="#5b9bdc" />
            <path d="M10 4c2-3 5-4 8-3-1 3-2 7-7 8z" fill="#d9c65a" />
            <path d="M9 11l15 4-3 2-8 5z" fill="#2fb84c" />
          </Svg>
        </Btn>
        <Btn label="Volume" className="w-[35px]">
          <Svg w={23} h={20}>
            <path d="M1 7h4l5-6v18l-5-6H1z" stroke="#fff" strokeWidth="1.300" />
            <path d="M13 7.500c1.300 1.500 1.300 3.500 0 5" stroke="#fff" strokeWidth="1.400" />
            <path d="M16 5c3 3 3 7 0 10M19 2c4 5 4 11 0 16" stroke="#999" strokeWidth="1.300" />
          </Svg>
        </Btn>
        <Btn label="Network" className="w-[37px]">
          <Svg w={20} h={20}>
            <path d="M1 19C1 8 9 1 19 1M6 19c0-8 5-13 13-13M11 19c0-5 3-8 8-8" stroke="#ddd" strokeWidth="1.300" />
            <circle cx="17.500" cy="17.500" r="1.800" fill="#fff" />
          </Svg>
        </Btn>
        <button type="button" className="ml-2 w-9 text-[17px]">ENG</button>
        <button type="button" className="ml-3 w-[98px] pt-[2px] text-center text-[17px] leading-7">
          10:29 AM
          <br />
          25-Jan-24
        </button>
        <Btn label="Notifications" className="mr-6 ml-4 w-9">
          <Svg w={24} h={24}>
            <path d="M.7.700h22.600v18.600h-8L12 23l-3.300-3.700h-8z" stroke="#fff" strokeWidth="1.400" />
          </Svg>
        </Btn>
        <div className="mr-[7px] h-[60px] w-px bg-[#5a5a5d]" />
      </div>
    </div>
  );
}

function Watermark() {
  return (
    <div className="pointer-events-none fixed bottom-[18px] left-1/2 flex -translate-x-1/2 flex-col items-center text-[#b8b8b8] opacity-45">
      <span dir="rtl" className="font-['DejaVu_Sans',sans-serif] text-[60px] leading-[58px] font-bold">مستقل</span>
      <span className="font-['Liberation_Sans',sans-serif] text-[38px] leading-[46px] font-bold">mostaql.com</span>
    </div>
  );
}

export default function App() {
  return (
    <div className={`flex h-screen flex-col overflow-hidden bg-[#e6e6e6] ${UI}`}>
      <div className="bg-[#217346]">
        <TitleBar />
        <TabBar />
      </div>
      <Ribbon />
      <FormulaBar />
      <SheetArea />
      <SheetTabs />
      <StatusBar />
      <Taskbar />
      <Watermark />
    </div>
  );
}
